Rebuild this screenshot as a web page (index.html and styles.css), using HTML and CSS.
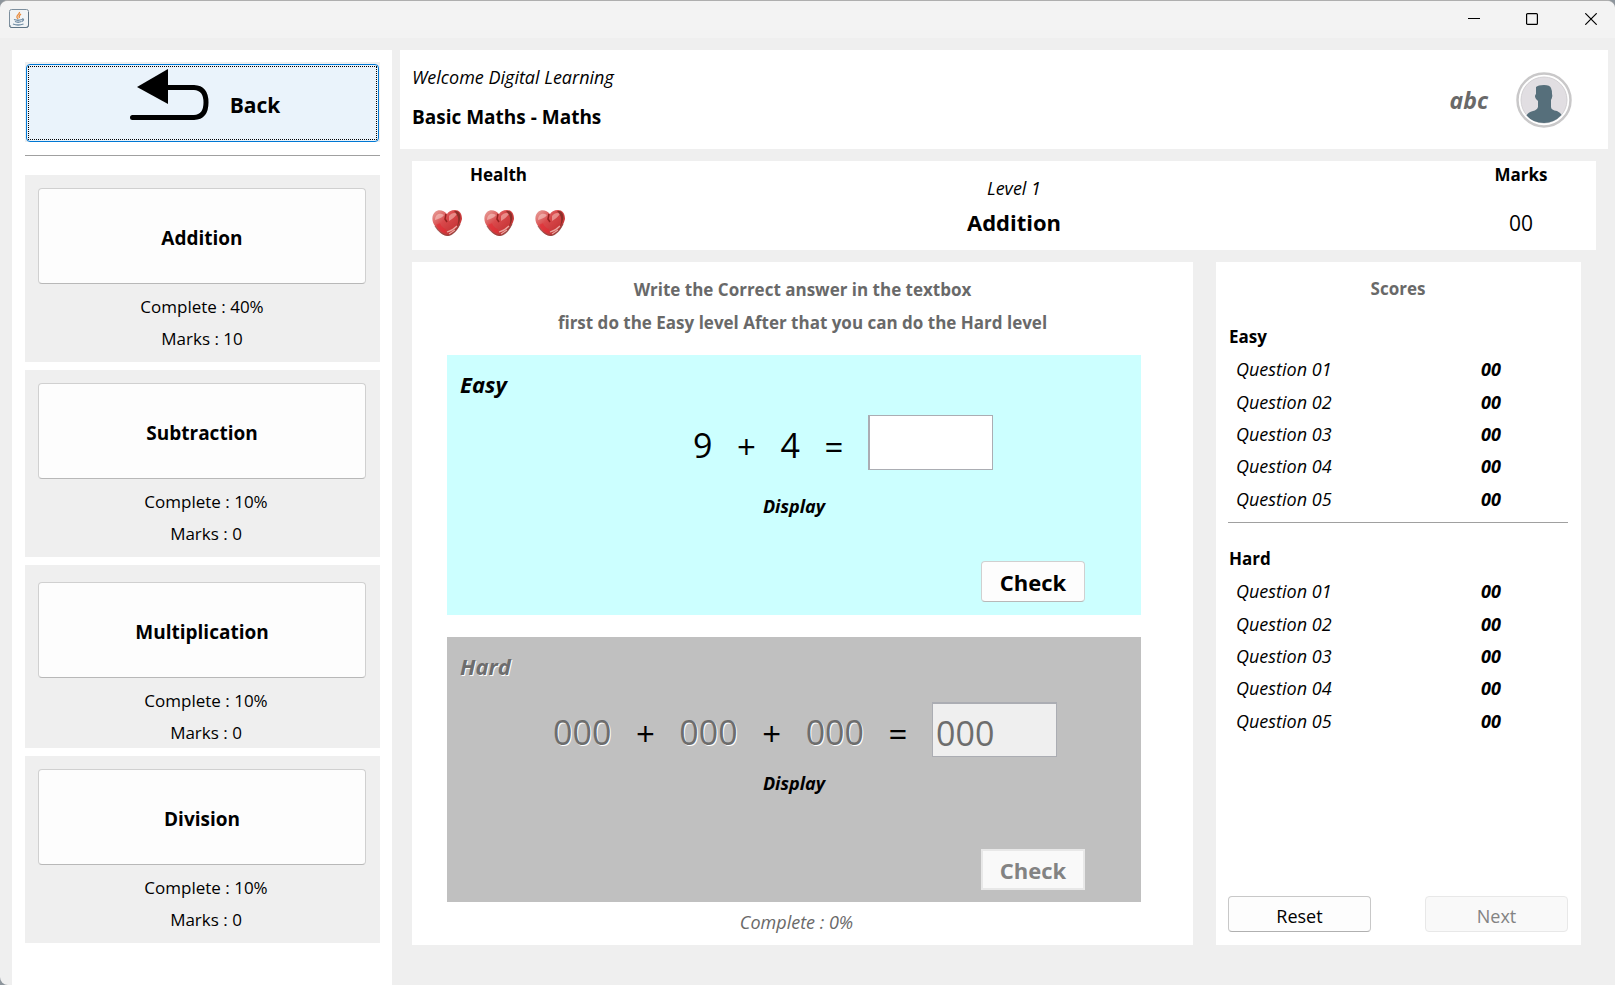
FILE: index.html
```html
<!DOCTYPE html>
<html lang="en">
<head>
<meta charset="utf-8">
<title>Basic Maths - Maths</title>
<link rel="stylesheet" href="styles.css">
</head>
<body>
<svg class="defs" aria-hidden="true">
  <defs>
    <linearGradient id="heart-fill" x1="0" y1="0" x2="1" y2="1">
      <stop offset="0" stop-color="#e9a9a2"/>
      <stop offset="0.4" stop-color="#d9494b"/>
      <stop offset="0.7" stop-color="#c9383a"/>
      <stop offset="1" stop-color="#7c1f1a"/>
    </linearGradient>
    <symbol id="heart" viewBox="0 0 30 26">
      <path d="M15 4C12 0 6 -1 3 2C-1 6 0 12 3 16C6 21 11 26 16 26C22 25 28 17 30 9C30 3 27 0 23 0C19 0 16 2 15 4Z" fill="url(#heart-fill)"/>
      <path d="M3 10C3 5 7 2 12 5C10 8 6 9 3 10Z" fill="#f6c9c4" opacity=".6"/>
      <path d="M17 6C19 3 23 2 25 4C23 7 20 9 17 11Z" fill="#efaaa4" opacity=".7"/>
      <path d="M25 1C30 4 29 10 25 17C27 10 27 6 22 1Z" fill="#7c2a22" opacity=".8"/>
      <path d="M14 4L13 9L15 12" stroke="#96201f" stroke-width="1.5" fill="none"/>
      <path d="M15 22C19 21 22 19 25 16M17 24L23 20" stroke="#eba6a0" stroke-width="1.2" fill="none"/>
      <path d="M6 14C8 19 12 21 14 21" stroke="#e5252f" stroke-width="4" fill="none" opacity=".5"/>
      <path d="M3 16C6 21 11 25 16 25.500C21 25 25 20 28 14" stroke="#8a4a44" stroke-width="1.200" fill="none" opacity=".7"/>
    </symbol>
  </defs>
</svg>
<div class="window">
  <header class="titlebar">
    <svg class="app-icon" viewBox="0 0 20 19" aria-hidden="true">
      <rect x=".5" y=".5" width="19" height="18" rx="2" fill="#f1f4f6" stroke="#7c8e9d"/>
      <path d="M1 16V17.500Q1 18.500 3 18.500H17Q19.500 18.500 19.500 16V3" fill="none" stroke="#5e7485"/>
      <path d="M10.500 3C11 5 7 6 8 8.500L9 10M12 5C9 7 10 8 10.500 9" fill="none" stroke="#e88a3c" stroke-width="1.300"/>
      <path d="M5 10.500Q9 12 13 10.500M6 12.500Q9 14 12.500 12.500M13 10Q16 10 13 12.500M4 15Q9 17 14.500 15" fill="none" stroke="#6e8ba3" stroke-width="1.300"/>
    </svg>
    <div class="window-controls">
      <button class="window-button" aria-label="Minimize"><svg viewBox="0 0 12 12"><path d="M0 5.500H12"/></svg></button>
      <button class="window-button" aria-label="Maximize"><svg viewBox="0 0 12 12"><rect x=".6" y=".6" width="10.800" height="10.800" rx="1"/></svg></button>
      <button class="window-button" aria-label="Close"><svg viewBox="0 0 12 12"><path d="M.3 .3L11.700 11.700M11.700 .3L.3 11.700"/></svg></button>
    </div>
  </header>

  <div class="content">
    <nav class="sidebar">
      <div class="back-wrap">
        <button class="back">
          <span class="back-focus">
            <svg class="back-icon" viewBox="0 0 80 52" aria-hidden="true">
              <path d="M7 18L38 0V35Z"/>
              <path d="M36 18.500H64Q76 19 76 33.500Q76 48 64 48.500H2.500" fill="none" stroke="#000" stroke-width="5" stroke-linecap="round"/>
            </svg>
            <span class="back-label">Back</span>
          </span>
        </button>
      </div>
      <hr class="rule">
      <div class="topics">
        <section class="topic">
          <button class="topic-button">Addition</button>
          <p class="stat">Complete : 40%</p>
          <p class="stat">Marks : 10</p>
        </section>
        <section class="topic topic-next">
          <button class="topic-button">Subtraction</button>
          <p class="stat">Complete : 10%</p>
          <p class="stat">Marks : 0</p>
        </section>
        <section class="topic topic-next topic-low">
          <button class="topic-button">Multiplication</button>
          <p class="stat">Complete : 10%</p>
          <p class="stat">Marks : 0</p>
        </section>
        <section class="topic topic-next">
          <button class="topic-button">Division</button>
          <p class="stat">Complete : 10%</p>
          <p class="stat">Marks : 0</p>
        </section>
      </div>
    </nav>

    <main class="main">
      <header class="welcome">
        <div class="welcome-text">
          <p class="greeting">Welcome Digital Learning</p>
          <h1 class="subject">Basic Maths - Maths</h1>
        </div>
        <span class="user-name">abc</span>
        <svg class="avatar" viewBox="0 0 56 56" role="img" aria-label="User">
          <circle cx="28" cy="28" r="26.500" fill="#fff" stroke="#c9c8c9" stroke-width="2.500"/>
          <circle cx="28" cy="28" r="23" fill="#e1dee2" stroke="#d2d0d3"/>
          <path d="M20 15Q22 13 28 13Q34 13 35 16Q36 18 36 22Q37 24 35 28V35Q35 38 41 39Q45 41 45.500 43Q38 51 28 51Q17 51 10.500 43.500Q12 40 17 39Q21 38 22 35V29L20 27Q18 24 20 22Z" fill="#566f7b"/>
        </svg>
      </header>

      <section class="status">
        <div class="health">
          <h2 class="status-title">Health</h2>
          <div class="hearts">
            <svg class="heart"><use href="#heart"/></svg>
            <svg class="heart"><use href="#heart"/></svg>
            <svg class="heart"><use href="#heart"/></svg>
          </div>
        </div>
        <div class="level">
          <p class="level-name">Level 1</p>
          <p class="level-topic">Addition</p>
        </div>
        <div class="marks">
          <h2 class="status-title">Marks</h2>
          <p class="marks-value">00</p>
        </div>
      </section>

      <div class="panels">
        <section class="quiz">
          <p class="hint">Write the Correct answer in the textbox</p>
          <p class="hint">first do the Easy level After that you can do the Hard level</p>
          <div class="stage stage-easy">
            <h2 class="stage-title">Easy</h2>
            <div class="equation">
              <span class="num">9</span><span class="op">+</span><span class="num">4</span><span class="op">=</span>
              <input class="answer" type="text" aria-label="Easy answer">
            </div>
            <p class="display">Display</p>
            <button class="check">Check</button>
          </div>
          <div class="stage stage-hard">
            <h2 class="stage-title">Hard</h2>
            <div class="equation">
              <span class="num off">000</span><span class="op">+</span><span class="num off">000</span><span class="op">+</span><span class="num off">000</span><span class="op">=</span>
              <input class="answer" type="text" value="000" aria-label="Hard answer" disabled>
            </div>
            <p class="display">Display</p>
            <button class="check" disabled>Check</button>
          </div>
          <p class="progress">Complete : 0%</p>
        </section>

        <aside class="scores">
          <h2 class="scores-title">Scores</h2>
          <h3 class="scores-group">Easy</h3>
          <table class="score-table">
            <tr><td>Question 01</td><td class="score">00</td></tr>
            <tr><td>Question 02</td><td class="score">00</td></tr>
            <tr><td>Question 03</td><td class="score">00</td></tr>
            <tr><td>Question 04</td><td class="score">00</td></tr>
            <tr><td>Question 05</td><td class="score">00</td></tr>
          </table>
          <hr class="rule rule-scores">
          <h3 class="scores-group">Hard</h3>
          <table class="score-table">
            <tr><td>Question 01</td><td class="score">00</td></tr>
            <tr><td>Question 02</td><td class="score">00</td></tr>
            <tr><td>Question 03</td><td class="score">00</td></tr>
            <tr><td>Question 04</td><td class="score">00</td></tr>
            <tr><td>Question 05</td><td class="score">00</td></tr>
          </table>
          <div class="actions">
            <button class="action">Reset</button>
            <button class="action" disabled>Next</button>
          </div>
        </aside>
      </div>
    </main>
  </div>
</div>
</body>
</html>
```
FILE: styles.css
```css
* { box-sizing: border-box; }

body {
  margin: 0;
  background: #8d959c;
  color: #000;
  font-family: "Open Sans", "Noto Sans", sans-serif;
  font-size: 17px;
  line-height: 32px;
}

h1, h2, h3, p { margin: 0; font-size: inherit; }

button, input { font: inherit; color: inherit; margin: 0; }

.defs { position: absolute; width: 0; height: 0; }

.window {
  display: flex;
  flex-direction: column;
  min-height: 100vh;
  background: #efefef;
  border-top: 1px solid #aeaeae;
  border-radius: 8px 8px 0 8px;
  overflow: hidden;
}

.titlebar {
  display: flex;
  justify-content: space-between;
  height: 37px;
  padding: 0 0 0 9px;
  background: #f3f3f3;
}

.app-icon { width: 20px; height: 19px; margin-top: 8px; }

.window-controls { display: flex; }

.window-button {
  width: 58px;
  padding: 0 0 2px;
  border: 0;
  background: none;
  line-height: 0;
}

.window-button:last-child { width: 54px; padding-left: 6px; }
.window-button svg { width: 12px; height: 12px; fill: none; stroke: #000; stroke-width: 1.2; }

.content {
  flex: 1;
  display: flex;
  gap: 8px;
  padding: 12px 7px 0 12px;
}

.sidebar {
  flex: 0 0 380px;
  padding: 12px 12px 0 13px;
  background: #fff;
}

.back-wrap { padding: 2px 1px 0; background: #efefef; }

.back {
  display: block;
  width: 100%;
  height: 78px;
  padding: 1px;
  border: 1px solid #0078d4;
  border-radius: 4px;
  background: #eaf3fb;
}

.back-focus {
  display: flex;
  justify-content: center;
  align-items: flex-start;
  gap: 20px;
  height: 100%;
  padding: 2px 0 0 5px;
  border: 1px dotted #000;
}

.back-icon { width: 80px; height: 52px; }
.back-label { padding-top: 20px; font-size: 21px; font-weight: 700; }

.rule {
  height: 1px;
  margin: 13px 0 0;
  border: 0;
  background: #a0a0a0;
}

.topics {
  display: flex;
  flex-direction: column;
  gap: 8px;
  margin-top: 19px;
}

.topic {
  height: 187px;
  padding: 13px 14px 0 13px;
  background: #efefef;
  text-align: center;
}

.topic-low { height: 183px; padding-top: 17px; }

.topic-button {
  display: block;
  width: 100%;
  height: 96px;
  margin-bottom: 7px;
  padding: 4px 0 0;
  border: 1px solid #d0d0d0;
  border-bottom-color: #b8b8b8;
  border-radius: 4px;
  background: #fdfdfd;
  font-size: 19px;
  font-weight: 700;
}

.topic-next .stat { padding-left: 8px; }
.stat { font-size: 17px; }

.main { flex: 1; min-width: 0; }

.welcome {
  display: flex;
  align-items: center;
  height: 99px;
  padding: 0 36px 0 12px;
  background: #fff;
}

.welcome-text { flex: 1; padding-bottom: 6px; line-height: 40px; }
.greeting { font-size: 18px; font-style: italic; }
.subject { font-size: 19px; font-weight: 700; }
.user-name { margin-right: 28px; color: #696969; font-size: 23px; font-weight: 700; font-style: italic; }
.avatar { width: 56px; height: 56px; }

.status {
  display: grid;
  grid-template-columns: 133px 1fr 116px;
  height: 89px;
  margin: 12px 12px 0;
  padding: 0 17px 0 20px;
  background: #fff;
  text-align: center;
}

.status-title { line-height: 28px; font-weight: 700; }
.hearts { display: flex; justify-content: space-between; padding-top: 21px; }
.heart { width: 30px; height: 26px; }
.level { padding-top: 11px; }
.level-name { font-size: 18px; font-style: italic; }
.level-topic { line-height: 36px; font-size: 22px; font-weight: 700; }
.marks-value { line-height: 68px; font-size: 21px; }

.panels {
  display: flex;
  gap: 23px;
  margin: 12px 27px 0 12px;
}

.quiz {
  flex: 1;
  height: 683px;
  padding-top: 11px;
  background: #fff;
  text-align: center;
}

.hint { line-height: 33px; color: #696969; font-weight: 700; }

.stage {
  display: flex;
  flex-direction: column;
  margin: 16px 52px 0 35px;
  padding: 0 13px;
}

.stage-easy { height: 260px; background: #ccffff; }
.stage-hard { height: 265px; margin-top: 22px; background: #c0c0c0; }

.stage-title {
  padding-top: 13px;
  text-align: left;
  font-size: 22px;
  font-weight: 700;
  font-style: italic;
}

.stage-hard .stage-title, .off { color: #6d6d6d; text-shadow: 1px 1px #fff; }

.equation {
  display: flex;
  justify-content: flex-end;
  align-items: center;
  gap: 22px;
  margin: 15px 135px 0 0;
  font-size: 34px;
}

.stage-hard .equation { margin: 20px 71px 0 0; }

.num { padding-top: 5px; }
.op { width: 24px; padding-top: 8px; font-size: 33px; }

.answer {
  width: 125px;
  height: 55px;
  padding: 5px 3px 0;
  border: 1px solid #abadb3;
  border-radius: 0;
  background: #fff;
}

.stage-easy .answer { border-left-width: 2px; }
.stage-hard .answer { border-top-width: 2px; }
.answer:disabled { background: #efefef; color: #6d6d6d; }

.display { margin-top: 20px; font-size: 18px; font-weight: 700; font-style: italic; }
.stage-hard .display { margin-top: 10px; }

.check {
  align-self: flex-end;
  width: 104px;
  height: 41px;
  margin: 39px 43px 0 0;
  padding: 0;
  border: 1px solid #d0d0d0;
  border-bottom-color: #b8b8b8;
  border-radius: 4px;
  background: #fdfdfd;
  font-size: 22px;
  font-weight: 700;
}

.stage-hard .check { margin-top: 50px; }

.check:disabled, .action:disabled {
  border-color: #e8e8e8;
  background: #f9f9f9;
  color: #838383;
}

.check:disabled { border-width: 2px; border-radius: 0; }

.progress {
  padding: 4px 12px 0 0;
  color: #696969;
  font-size: 18px;
  font-style: italic;
}

.scores {
  display: flex;
  flex-direction: column;
  flex: 0 0 365px;
  padding: 11px 13px 13px 12px;
  background: #fff;
}

.scores-title { color: #696969; text-align: center; font-weight: 700; }
.scores-group { margin-top: 16px; padding-left: 1px; font-weight: 700; }

.score-table {
  width: 100%;
  height: 162px;
  border-collapse: collapse;
  font-size: 18px;
  font-style: italic;
}

.score-table td { padding: 0 0 0 8px; }
.score-table .score { width: 87px; padding: 0; font-weight: 700; }

.rule-scores { margin: 7px 0 4px; }

.actions {
  display: flex;
  justify-content: space-between;
  margin-top: auto;
}

.action {
  width: 143px;
  height: 36px;
  padding: 3px 0 0;
  border: 1px solid #c8c8c8;
  border-bottom-color: #b0b0b0;
  border-radius: 4px;
  background: #fdfdfd;
  font-size: 18px;
}
```
